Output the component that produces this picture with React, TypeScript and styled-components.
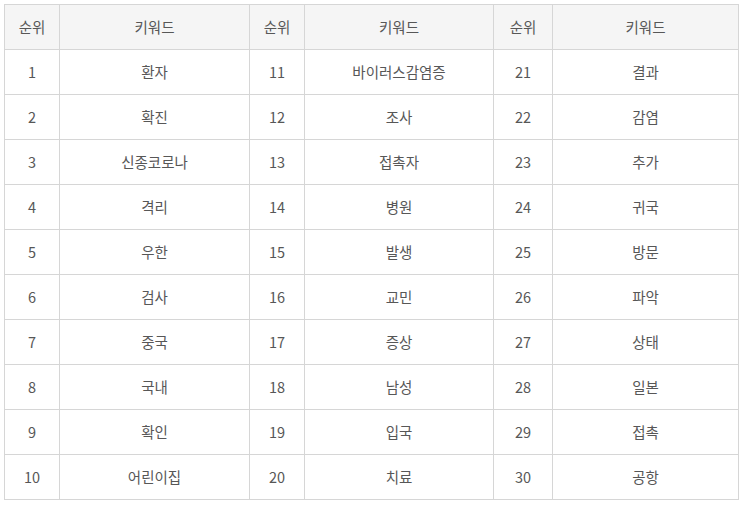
import React from "react";
import styled, { createGlobalStyle } from "styled-components";

const GlobalStyle = createGlobalStyle`
  body {
    margin: 0;
    background: #ffffff;
    font-family: "Noto Sans CJK KR", "Noto Sans", sans-serif;
  }
`;

const Wrap = styled.div`
  padding: 4px 0 0 4px;
`;

const Table = styled.table`
  border-collapse: collapse;
  table-layout: fixed;
  width: 735px;
  color: #575757;
  font-size: 14.5px;
  line-height: 1.2;
`;

const HeadCell = styled.th`
  height: 43px;
  padding: 0 0 1px;
  border: 1px solid #d6d6d6;
  background-color: #f5f5f5;
  font-weight: normal;
  text-align: center;
  vertical-align: middle;
`;

const Cell = styled.td`
  height: 43px;
  padding: 0 0 1px;
  border: 1px solid #d6d6d6;
  text-align: center;
  vertical-align: middle;
`;

// 순위 1~30 키워드
const keywords = [
  "환자", "확진", "신종코로나", "격리", "우한", "검사", "중국", "국내", "확인", "어린이집",
  "바이러스감염증", "조사", "접촉자", "병원", "발생", "교민", "증상", "남성", "입국", "치료",
  "결과", "감염", "추가", "귀국", "방문", "파악", "상태", "일본", "접촉", "공항",
];

const widths = [55, 190, 55, 189, 59, 186];

const App = () => {
  const rows = Array.from({ length: 10 }, (_, i) => i);
  return (
    <>
      <GlobalStyle />
      <Wrap>
        <Table>
          <colgroup>
            {widths.map((w, i) => (
              <col key={i} style={{ width: w }} />
            ))}
          </colgroup>
          <thead>
            <tr>
              {[0, 1, 2].map((g) => (
                <React.Fragment key={g}>
                  <HeadCell>순위</HeadCell>
                  <HeadCell>키워드</HeadCell>
                </React.Fragment>
              ))}
            </tr>
          </thead>
          <tbody>
            {rows.map((r) => (
              <tr key={r}>
                {[0, 1, 2].map((g) => {
                  const rank = g * 10 + r + 1;
                  return (
                    <React.Fragment key={g}>
                      <Cell>{rank}</Cell>
                      <Cell>{keywords[rank - 1]}</Cell>
                    </React.Fragment>
                  );
                })}
              </tr>
            ))}
          </tbody>
        </Table>
      </Wrap>
    </>
  );
};

export default App;
